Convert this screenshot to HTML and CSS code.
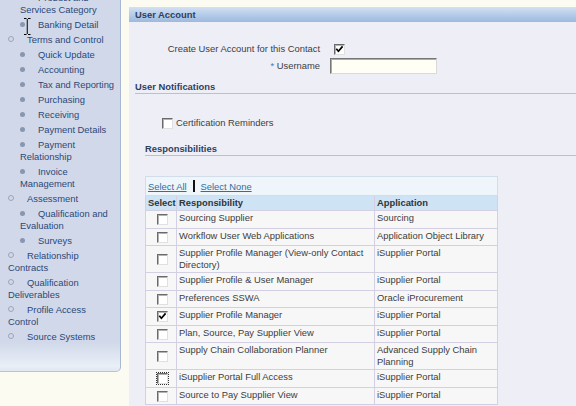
FILE: index.html
```html
<!DOCTYPE html>
<html lang="en">
<head>
    <meta charset="UTF-8">
    <meta name="viewport" content="width=device-width, initial-scale=1.0">
    <title>Supplier Contact - User Account</title>
    <link rel="stylesheet" href="styles.css">
</head>
<body>
    <div class="page">
        <nav class="side-nav">
            <ul class="nav-list">
                <li class="nav-group">
                    <ul class="nav-sub">
                        <li><span class="dot"></span>Product and Services Category</li>
                        <li><span class="dot"></span>Banking Detail</li>
                    </ul>
                </li>
                <li><span class="ring"></span>Terms and Control
                    <ul class="nav-sub">
                        <li><span class="dot"></span>Quick Update</li>
                        <li><span class="dot"></span>Accounting</li>
                        <li><span class="dot"></span>Tax and Reporting</li>
                        <li><span class="dot"></span>Purchasing</li>
                        <li><span class="dot"></span>Receiving</li>
                        <li><span class="dot"></span>Payment Details</li>
                        <li><span class="dot"></span>Payment Relationship</li>
                        <li><span class="dot"></span>Invoice Management</li>
                    </ul>
                </li>
                <li><span class="ring"></span>Assessment
                    <ul class="nav-sub">
                        <li><span class="dot"></span>Qualification and Evaluation</li>
                        <li><span class="dot"></span>Surveys</li>
                    </ul>
                </li>
                <li><span class="ring"></span>Relationship Contracts</li>
                <li><span class="ring"></span>Qualification Deliverables</li>
                <li><span class="ring"></span>Profile Access Control</li>
                <li><span class="ring"></span>Source Systems</li>
            </ul>

            <!-- mouse text cursor caught in the screenshot -->
            <svg class="text-cursor" width="9" height="17" viewBox="0 0 9 17">
                <path d="M1 0.5h2.5M5 0.5h2.5M4.25 1v15M1 16.5h2.5M5 16.5h2.5" fill="none" stroke="#000" stroke-width="1"/>
            </svg>
        </nav>

        <main class="content">
            <div class="bar-header">User Account</div>

            <div class="form-grid">
                <label class="form-label">Create User Account for this Contact</label>
                <div class="form-field">
                    <span class="box checked">
                        <svg width="9" height="9" viewBox="0 0 9 9"><path d="M1.3 3.8L3.4 6.3L7.6 1.4" fill="none" stroke="#000" stroke-width="1.7"/></svg>
                    </span>
                </div>
                <label class="form-label" for="username"><span class="req">*</span> Username</label>
                <div class="form-field">
                    <input type="text" id="username" class="text-input">
                </div>
            </div>

            <h2 class="sub-header">User Notifications</h2>
            <div class="notify-row"><span class="box"></span>Certification Reminders</div>

            <h2 class="sub-header resp-header">Responsibilities</h2>

            <table class="resp-table">
                <colgroup>
                    <col class="w-select">
                    <col class="w-resp">
                    <col class="w-app">
                </colgroup>
                <tr class="select-bar">
                    <td colspan="3"><a href="#">Select All</a><span class="sep"></span><a href="#">Select None</a></td>
                </tr>
                <tr class="head-row">
                    <th>Select</th>
                    <th>Responsibility</th>
                    <th>Application</th>
                </tr>
                <tr>
                    <td class="cell-check"><span class="box"></span></td>
                    <td>Sourcing Supplier</td>
                    <td>Sourcing</td>
                </tr>
                <tr>
                    <td class="cell-check"><span class="box"></span></td>
                    <td>Workflow User Web Applications</td>
                    <td>Application Object Library</td>
                </tr>
                <tr>
                    <td class="cell-check"><span class="box"></span></td>
                    <td>Supplier Profile Manager (View-only Contact Directory)</td>
                    <td>iSupplier Portal</td>
                </tr>
                <tr>
                    <td class="cell-check"><span class="box"></span></td>
                    <td>Supplier Profile &amp; User Manager</td>
                    <td>iSupplier Portal</td>
                </tr>
                <tr>
                    <td class="cell-check"><span class="box"></span></td>
                    <td>Preferences SSWA</td>
                    <td>Oracle iProcurement</td>
                </tr>
                <tr>
                    <td class="cell-check">
                        <span class="box checked">
                            <svg width="9" height="9" viewBox="0 0 9 9"><path d="M1.3 3.8L3.4 6.3L7.6 1.4" fill="none" stroke="#000" stroke-width="1.7"/></svg>
                        </span>
                    </td>
                    <td>Supplier Profile Manager</td>
                    <td>iSupplier Portal</td>
                </tr>
                <tr>
                    <td class="cell-check"><span class="box"></span></td>
                    <td>Plan, Source, Pay Supplier View</td>
                    <td>iSupplier Portal</td>
                </tr>
                <tr>
                    <td class="cell-check"><span class="box"></span></td>
                    <td>Supply Chain Collaboration Planner</td>
                    <td>Advanced Supply Chain Planning</td>
                </tr>
                <tr>
                    <td class="cell-check"><span class="box focused"></span></td>
                    <td>iSupplier Portal Full Access</td>
                    <td>iSupplier Portal</td>
                </tr>
                <tr>
                    <td class="cell-check"><span class="box"></span></td>
                    <td>Source to Pay Supplier View</td>
                    <td>iSupplier Portal</td>
                </tr>
            </table>
        </main>
    </div>
</body>
</html>
```

FILE: styles.css
```css
* {
    box-sizing: border-box;
}
body {
    margin: 0;
    height: 406px;
    overflow: hidden;
    background-color: #fbfbf2;
    font-family: "Liberation Sans", Arial, sans-serif;
    font-size: 9.4px;
    color: #3d3d3d;
}
.page {
    display: flex;
    gap: 8px;
    height: 100%;
    align-items: flex-start;
}

/* left navigation */
.side-nav {
    position: relative;
    flex: 0 0 121px;
    height: 372px;
    padding: 0 3px 0 8px;
    background: linear-gradient(to bottom, #d1d8e9 0, #d1d8e9 342px, #e9eff7 366px, #e0e8f1 371px);
    border-right: 1px solid #a9b7d2;
    border-bottom: 1px solid #b6c2d6;
    border-bottom-right-radius: 5px;
    overflow: hidden;
    color: #2b4878;
    line-height: 12px;
}
.nav-list,
.nav-sub {
    list-style: none;
    margin: 0;
    padding: 0;
}
.nav-list {
    margin-top: -8px;
}
.nav-sub {
    margin-top: 3px;
    padding-left: 12px;
}
.nav-group > .nav-sub {
    margin-top: 0;
}
.nav-list li {
    margin-bottom: 3px;
}
.dot {
    display: inline-block;
    width: 5px;
    height: 5px;
    margin-right: 13px;
    border-radius: 50%;
    background-color: #8896b0;
    vertical-align: 1px;
}
.ring {
    display: inline-block;
    width: 6px;
    height: 6px;
    margin-right: 13px;
    border: 1px solid #9ca6b9;
    border-radius: 50%;
    vertical-align: 1px;
}
.text-cursor {
    position: absolute;
    left: 23px;
    top: 18px;
}

/* main panel */
.content {
    flex: 1;
    align-self: stretch;
    margin-top: 7px;
    background-color: #eeeef6;
}
.bar-header {
    height: 15px;
    padding-left: 6px;
    line-height: 15px;
    font-weight: bold;
    color: #2f3f5c;
    background: linear-gradient(to bottom, #d3e0f2 0, #b4cbe8 55%, #9db9de 100%);
}
.form-grid {
    display: grid;
    grid-template-columns: 191px auto;
    column-gap: 10px;
    row-gap: 3px;
    align-items: center;
    padding-top: 20px;
}
.form-label {
    text-align: right;
    line-height: 12px;
}
.form-field {
    display: flex;
    align-items: center;
    min-height: 12px;
}
.form-field .box {
    margin: 2px 0 0 4px;
}
.req {
    color: #3d78c0;
}
.text-input {
    width: 107px;
    height: 16px;
    margin: 0;
    padding: 0 2px;
    border: 1px solid;
    border-color: #777 #dadada #dadada #777;
    box-shadow: inset 1px 1px 0 #ababab;
    background-color: #fffff5;
    font: inherit;
}
.sub-header {
    margin: 7px 0 0 6px;
    font-size: 9.4px;
    line-height: 12px;
    font-weight: bold;
    color: #2f3f5c;
    border-bottom: 1px solid #a9c5e6;
}
.resp-header {
    margin: 14px 0 0 16px;
}
.notify-row {
    display: flex;
    align-items: center;
    gap: 3px;
    height: 12px;
    margin: 23px 0 0 33px;
    line-height: 12px;
}

/* checkbox look */
.box {
    display: inline-flex;
    align-items: center;
    justify-content: center;
    width: 11px;
    height: 11px;
    border: 1px solid;
    border-color: #6a6a6a #e0e0e0 #e0e0e0 #6a6a6a;
    box-shadow: inset 1px 1px 0 #b3b3b3;
    background-color: #fff;
    vertical-align: middle;
}
.box.focused {
    outline: 1px dotted #333;
    outline-offset: 0;
}

/* responsibilities table */
.resp-table {
    width: 352px;
    margin: 20px 0 0 16px;
    table-layout: fixed;
    border-collapse: collapse;
    line-height: 12px;
}
.w-select {
    width: 31px;
}
.w-resp {
    width: 198px;
}
.w-app {
    width: 123px;
}
.resp-table td,
.resp-table th {
    padding: 1px 3px 1px 2px;
    border: 1px solid #d4d0e3;
    background-color: #f7f7f7;
    vertical-align: top;
    text-align: left;
}
.resp-table .select-bar td {
    padding: 3px 2px 2px;
    background-color: #eef5fb;
    border-color: #d2dde9;
}
.select-bar a {
    color: #2e6f9e;
}
.sep {
    display: inline-block;
    width: 2px;
    height: 12px;
    margin: 0 6px;
    background-color: #111;
    vertical-align: -2px;
}
.resp-table .head-row th {
    padding: 1px 2px 1px;
    line-height: 12px;
    font-weight: bold;
    color: #333;
    background-color: #cee3f3;
}
.resp-table .cell-check {
    padding: 3px 0 2.5px;
    line-height: 0;
    vertical-align: middle;
}
.cell-check .box {
    display: flex;
    margin: 0 auto;
    transform: translateX(1px);
}
```
